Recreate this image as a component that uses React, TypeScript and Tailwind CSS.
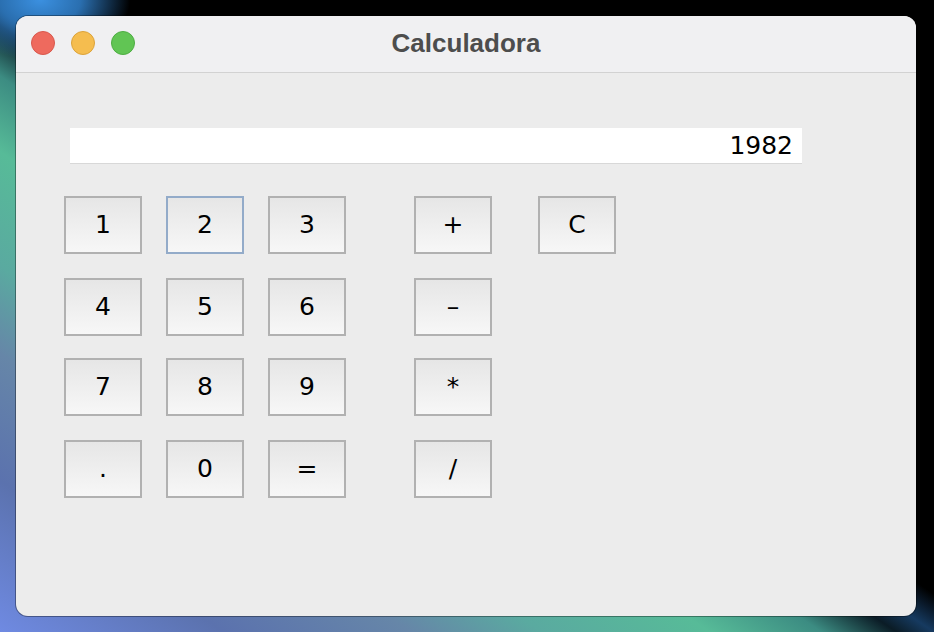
const rows: { keys: string[]; ops: string[]; gap: string }[] = [
  { keys: ["1", "2", "3"], ops: ["+", "C"], gap: "mt-0" },
  { keys: ["4", "5", "6"], ops: ["–"], gap: "mt-[24px]" },
  { keys: ["7", "8", "9"], ops: ["*"], gap: "mt-[22px]" },
  { keys: [".", "0", "="], ops: ["/"], gap: "mt-[24px]" },
];

function CalcButton({ label, focused }: { label: string; focused?: boolean }) {
  return (
    <button
      className={`w-[78px] h-[58px] flex items-center justify-center border-2 bg-gradient-to-b from-[#e6e6e6] to-[#f7f7f7] text-[25px] text-black font-['DejaVu_Sans',sans-serif] ${
        focused ? "border-[#93abc9]" : "border-[#b1b1b1]"
      }`}
    >
      {label}
    </button>
  );
}

export default function App() {
  return (
    <div className="w-[934px] h-[632px] p-4 bg-[radial-gradient(ellipse_90px_60px_at_40px_0px,#3b90e0_0%,#2a6fb0_45%,transparent_100%),linear-gradient(to_top_right,#6f8ae2_0%,#5b72ae_12%,#6686a8_22%,#5aaaa0_29%,#57bb98_38%,#3c8c82_44%,#0b1c26_48%,#163a60_50%,#000_53%,#000_100%)]">
      <div className="w-[900px] h-[600px] rounded-[12px] overflow-hidden bg-[#ececec] flex flex-col shadow-[0_0_0_1px_rgba(0,0,0,0.35)]">
        {/* title bar */}
        <div className="relative h-[57px] shrink-0 bg-[#f0f0f2] border-b border-[#d2d2d2] flex items-center justify-center">
          <div className="absolute left-[15px] top-[15px] flex gap-4">
            <span className="w-6 h-6 rounded-full bg-[#ee6a5e] border border-[#d9584d]" />
            <span className="w-6 h-6 rounded-full bg-[#f5bd4f] border border-[#dca33a]" />
            <span className="w-6 h-6 rounded-full bg-[#61c554] border border-[#4ead43]" />
          </div>
          <h1 className="text-[26px] font-bold text-[#4d4d4d] font-['Liberation_Sans',Arial,sans-serif] -mt-[2px]">
            Calculadora
          </h1>
        </div>

        {/* body */}
        <div className="flex flex-col pt-[55px]">
          <div className="ml-[54px] w-[732px] h-[36px] bg-white border-b border-[#d8d8d8] flex items-center justify-end pr-[9px] text-[25px] text-black font-['DejaVu_Sans',sans-serif]">
            1982
          </div>

          <div className="ml-[48px] mt-[32px] flex flex-col">
            {rows.map((row, i) => (
              <div key={i} className={`flex ${row.gap}`}>
                <div className="flex gap-[24px]">
                  {row.keys.map((k) => (
                    <CalcButton key={k} label={k} focused={k == "2"} />
                  ))}
                </div>
                <div className="flex gap-[46px] ml-[68px]">
                  {row.ops.map((o) => (
                    <CalcButton key={o} label={o} />
                  ))}
                </div>
              </div>
            ))}
          </div>
        </div>
      </div>
    </div>
  );
}
